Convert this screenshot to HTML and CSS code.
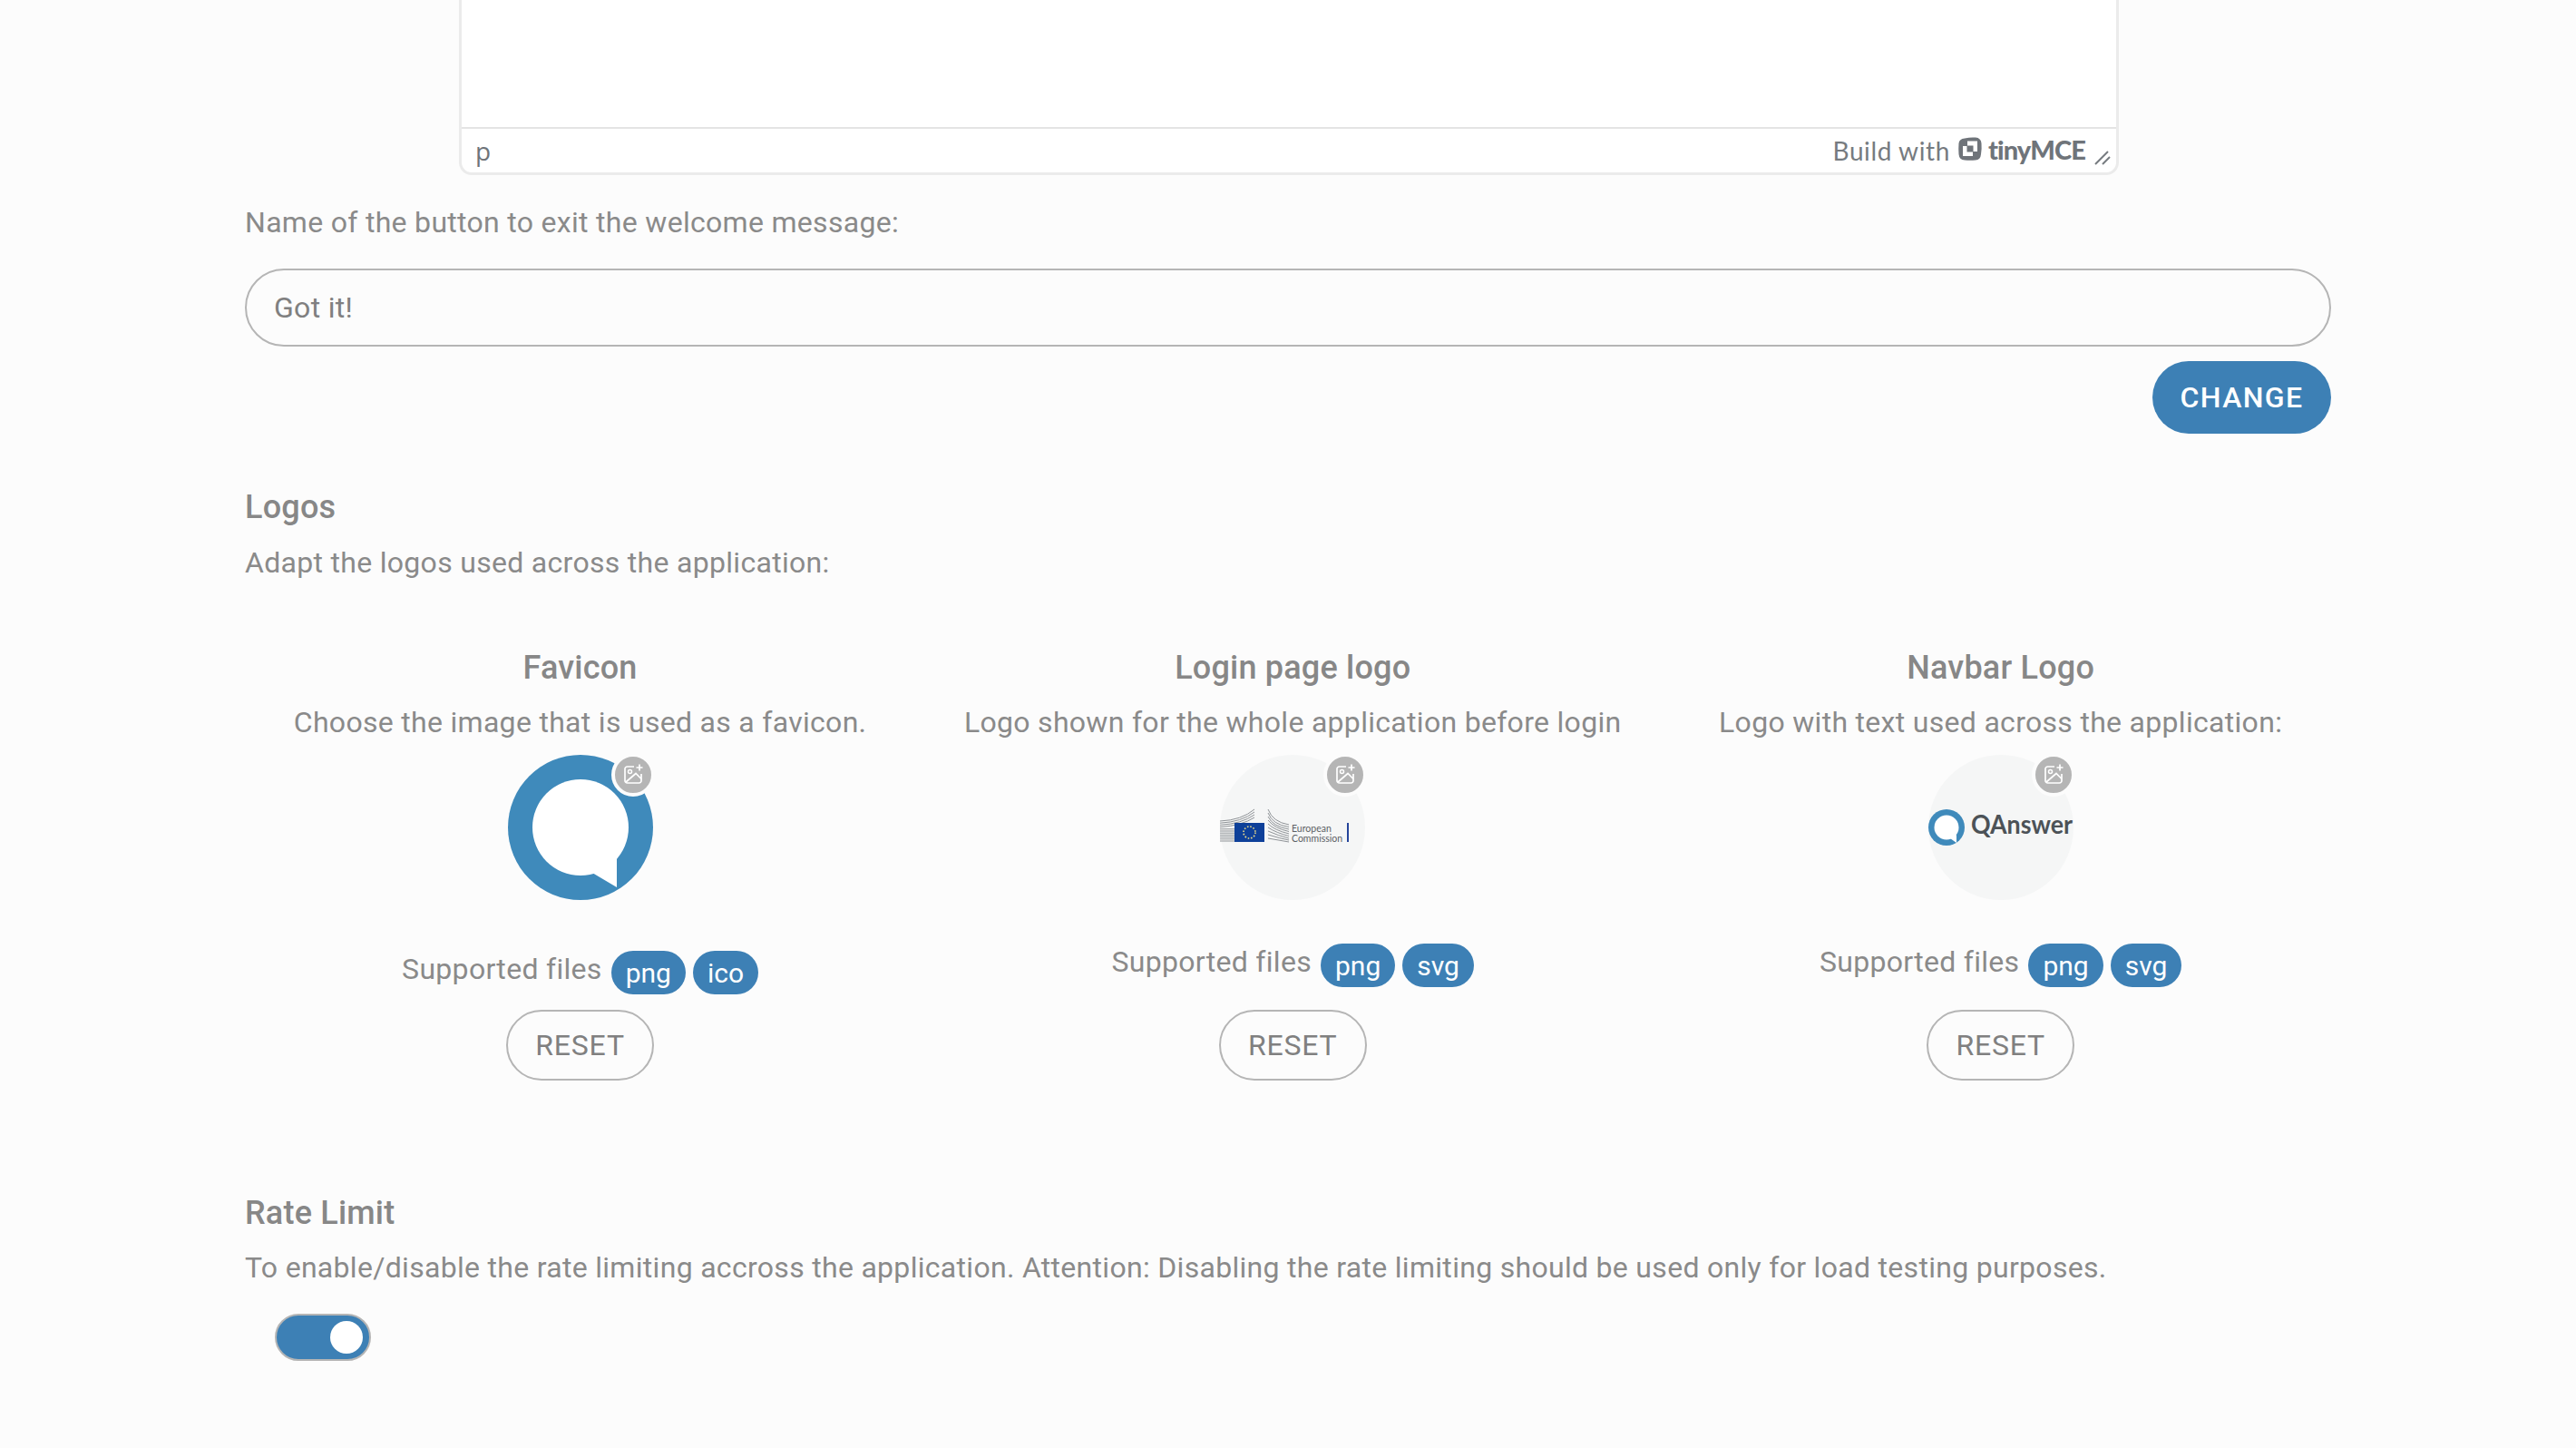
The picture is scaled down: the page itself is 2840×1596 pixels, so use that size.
FILE: index.html
```html
<!DOCTYPE html>
<html lang="en">
<head>
<meta charset="utf-8">
<title>Settings</title>
<link rel="stylesheet" href="styles.css">
</head>
<body>
<svg class="defs" width="0" height="0" aria-hidden="true">
  <symbol id="add-image" viewBox="0 0 24 24">
    <path d="M13 3H5.5A2.5 2.5 0 0 0 3 5.500V18.500A2.500 2.500 0 0 0 5.500 21H18.500A2.500 2.500 0 0 0 21 18.500V11" fill="none" stroke="currentColor" stroke-width="1.7"/>
    <path d="M19 0.500V7.500M15.500 4H22.500" fill="none" stroke="currentColor" stroke-width="1.700"/>
    <circle cx="8.500" cy="8.500" r="2" fill="none" stroke="currentColor" stroke-width="1.500"/>
    <path d="M4 20L15 10.500L21 16.500" fill="none" stroke="currentColor" stroke-width="1.700"/>
  </symbol>
</svg>
<main class="page">
  <section class="editor">
    <div class="editor-body"></div>
    <div class="editor-status">
      <span class="path">p</span>
      <span class="brand">
        <span class="build">Build with</span>
        <svg class="tiny-icon" viewBox="0 0 26 26"><path d="M7 1.500Q13 0 19 0.500Q25 1 25.500 7Q26 13 25 19Q24.500 25 19 25.500Q13 26 7 25.500Q1 25 0.500 19Q0 13 0.500 7Q1 2 7 1.500Z" fill="#6f747a"/><path d="M10 4.500H21V16H16V21H5V10H10Z" fill="#fff"/><rect x="9.500" y="9.500" width="7" height="7" fill="#6f747a"/></svg>
        <span class="tiny">tinyMCE</span>
        <svg class="grip" viewBox="0 0 18 16"><path d="M1 15L15 1M9 15L17 7" stroke="#777c81" stroke-width="2" fill="none"/></svg>
      </span>
    </div>
  </section>

  <label class="text label-exit">Name of the button to exit the welcome message:</label>
  <div class="input">Got it!</div>
  <div class="actions"><button class="primary">CHANGE</button></div>

  <h2 class="heading logos-heading">Logos</h2>
  <p class="text intro">Adapt the logos used across the application:</p>

  <div class="logo-row">
    <article class="logo-col">
      <h3 class="heading">Favicon</h3>
      <p class="text col-desc">Choose the image that is used as a favicon.</p>
      <div class="avatar plain">
        <svg class="avatar-img" viewBox="0 0 160 160"><circle cx="80" cy="80" r="80" fill="#3f8abb"/><circle cx="80" cy="80" r="53" fill="#fff"/><path d="M93 130L120 146V113Z" fill="#fff"/></svg>
        <span class="badge"><svg class="badge-icon"><use href="#add-image"/></svg></span>
      </div>
      <div class="files first"><span class="text">Supported files</span><span class="pill">png</span><span class="pill">ico</span></div>
      <button class="reset">RESET</button>
    </article>

    <article class="logo-col">
      <h3 class="heading">Login page logo</h3>
      <p class="text col-desc">Logo shown for the whole application before login</p>
      <div class="avatar">
        <svg class="avatar-img" viewBox="0 0 160 160">
          <g fill="none" stroke="#8f9397" stroke-width="1">
            <path d="M0 73Q24 72 38 60M0 75.200Q24 74 38 63M0 77.400Q24 76 38 66M0 79.600Q24 78 38 69M0 81.800H16M0 84H16M0 86.200H16M0 88.400H16M0 90.600H16M0 92.800H16M0 95H16"/>
            <path d="M53 60Q58 74 76 77M53 64Q58 77 76 79.500M53 68Q58 79 76 82M53 72Q60 81 76 84.500M53 76Q60 83 76 87M53 80Q62 86 76 89.500M53 84Q64 89 76 92M53 88Q66 92 76 94M53 92L76 96"/>
          </g>
          <rect x="16" y="75" width="33" height="21" fill="#0e4099"/>
          <circle cx="32.500" cy="85.500" r="6.500" fill="none" stroke="#e9d98a" stroke-width="1.600" stroke-dasharray="1.600 1.800"/>
          <text class="ec-text" x="79" y="84.500">European</text>
          <text class="ec-text" x="79" y="95.500">Commission</text>
          <rect x="140" y="75" width="2" height="21" fill="#26459a"/>
        </svg>
        <span class="badge"><svg class="badge-icon"><use href="#add-image"/></svg></span>
      </div>
      <div class="files"><span class="text">Supported files</span><span class="pill">png</span><span class="pill">svg</span></div>
      <button class="reset">RESET</button>
    </article>

    <article class="logo-col">
      <h3 class="heading">Navbar Logo</h3>
      <p class="text col-desc">Logo with text used across the application:</p>
      <div class="avatar">
        <svg class="avatar-img" viewBox="0 0 160 160">
          <circle cx="20" cy="80" r="20" fill="#3f8abb"/><circle cx="20" cy="80" r="13.500" fill="#fff"/><path d="M24 92L31 97V88Z" fill="#fff"/>
          <text class="qa-text" x="47" y="87" textLength="112" lengthAdjust="spacingAndGlyphs">QAnswer</text>
        </svg>
        <span class="badge"><svg class="badge-icon"><use href="#add-image"/></svg></span>
      </div>
      <div class="files"><span class="text">Supported files</span><span class="pill">png</span><span class="pill">svg</span></div>
      <button class="reset">RESET</button>
    </article>
  </div>

  <h2 class="heading rate-heading">Rate Limit</h2>
  <p class="text rate-desc">To enable/disable the rate limiting accross the application. Attention: Disabling the rate limiting should be used only for load testing purposes.</p>
  <div class="toggle"><span class="knob"></span></div>
</main>
</body>
</html>
```
FILE: styles.css
```css
* { box-sizing: border-box; }
html, body { margin: 0; padding: 0; height: 1596px; overflow: hidden; background: #fcfcfc; }
body { font-family: Roboto, "Liberation Sans", sans-serif; color: #858585; }
.defs { position: absolute; }
.page { padding: 0 270px; }

.text { font-size: 32px; line-height: 48px; color: #8a8a8a; letter-spacing: 0.3px; margin: 0; }
.heading { font-size: 36px; line-height: 48px; font-weight: 500; color: #878787; margin: 0; letter-spacing: 0.2px; }

.editor { margin: 0 234px 0 236px; height: 193px; display: flex; flex-direction: column; background: #fff; border: solid #ebebeb; border-width: 0 3px 3px; border-radius: 0 0 14px 14px; }
.editor-body { flex: 1; border-bottom: 2px solid #e4e4e4; }
.editor-status { height: 48px; display: flex; align-items: center; justify-content: space-between; padding: 0 6px 0 15px; }
.path { font-size: 28px; color: #6f747a; font-family: "Open Sans", sans-serif; }
.brand { display: flex; align-items: center; }
.build { font-family: Lato, sans-serif; font-size: 28px; color: #767b80; letter-spacing: 0.6px; }
.tiny-icon { width: 26px; height: 26px; margin: 0 7px 0 9px; position: relative; top: -2px; }
.tiny { font-family: Lato, sans-serif; font-size: 29px; font-weight: 900; color: #6f747a; position: relative; top: -2px; letter-spacing: -0.85px; }
.grip { width: 18px; height: 16px; margin-left: 10px; position: relative; top: 8px; }

.label-exit { display: block; margin-top: 28px; }
.input { margin-top: 27px; height: 86px; border: 2px solid #b5b5b5; border-radius: 43px; padding: 0 30px; display: flex; align-items: center; font-size: 32px; color: #808080; letter-spacing: 0.3px; }
.actions { margin-top: 16px; display: flex; justify-content: flex-end; }
.primary { width: 197px; height: 80px; border: 0; border-radius: 40px; background: #3d80b5; color: #fff; font: 500 32px Roboto, sans-serif; letter-spacing: 1.4px; }

.logos-heading { margin-top: 57px; }
.intro { margin-top: 13px; }

.logo-row { margin-top: 68px; display: flex; justify-content: space-around; }
.logo-col { display: flex; flex-direction: column; align-items: center; }
.col-desc { margin-top: 12px; }

.avatar { margin-top: 12px; width: 160px; height: 160px; border-radius: 50%; background: #f5f6f6; position: relative; }
.avatar.plain { background: transparent; }
.avatar-img { display: block; width: 160px; height: 160px; overflow: visible; }
.badge { position: absolute; left: 114px; top: -2px; width: 48px; height: 48px; border-radius: 50%; border: 4px solid #fcfcfc; background: #b5b5b5; color: #fff; display: flex; align-items: center; justify-content: center; }
.badge-icon { width: 24px; height: 24px; }

.files { margin-top: 48px; margin-bottom: 25px; height: 48px; display: flex; align-items: flex-start; gap: 8px; }
.files .text { line-height: 40px; margin-right: 2px; }
.files.first { margin-top: 56px; margin-bottom: 17px; }
.pill { height: 48px; padding: 0 16px; border-radius: 24px; background: #3d80b5; color: #fff; font-size: 30px; line-height: 49px; }

.reset { width: 163px; height: 78px; border: 2px solid #b5b5b5; border-radius: 39px; background: transparent; color: #808080; font: 400 32px Roboto, sans-serif; letter-spacing: 0.8px; }

.ec-text { font-family: Lato, sans-serif; font-size: 10.500px; fill: #5c6165; }
.qa-text { font-family: Lato, sans-serif; font-size: 29px; font-weight: 700; fill: #4c5257; }

.rate-heading { margin-top: 122px; }
.rate-desc { margin-top: 12px; }
.toggle { margin: 27px 0 0 33px; width: 106px; height: 52px; border: 2px solid #b5b5b5; border-radius: 26px; background: #3d80b5; display: flex; align-items: center; justify-content: flex-end; padding-right: 7px; }
.knob { width: 36px; height: 36px; border-radius: 50%; background: #fff; }
```
